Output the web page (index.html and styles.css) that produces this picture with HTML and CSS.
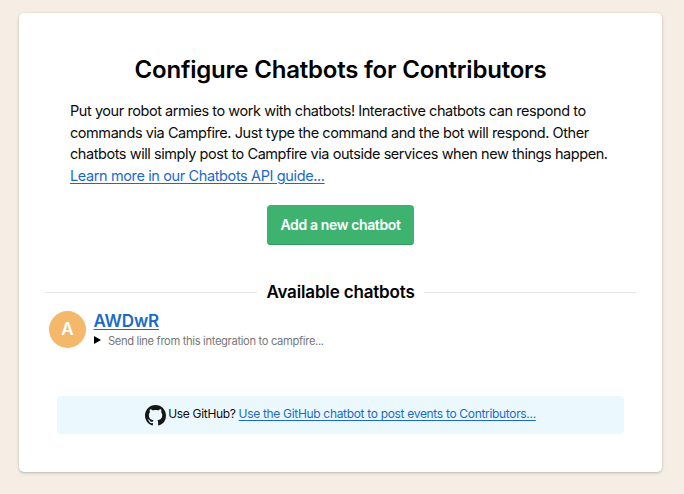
FILE: index.html
```html
<!DOCTYPE html>
<html lang="en">
<head>
<meta charset="utf-8">
<title>Configure Chatbots</title>
<link rel="stylesheet" href="styles.css">
</head>
<body>
<main class="panel">
  <h1 class="title">Configure Chatbots for Contributors</h1>
  <p class="intro">Put your robot armies to work with chatbots! Interactive chatbots can respond to<br>commands via Campfire. Just type the command and the bot will respond. Other<br>chatbots will simply post to Campfire via outside services when new things happen.<br><a href="#">Learn more in our Chatbots API guide...</a></p>
  <button class="button" type="button">Add a new chatbot</button>
  <h2 class="divider"><span>Available chatbots</span></h2>
  <section class="bot">
    <div class="avatar">A</div>
    <div class="bot-body">
      <a class="bot-name" href="#">AWDwR</a>
      <div class="bot-detail">
        <svg class="marker" viewBox="0 0 7 8"><path d="M0 0L7 4L0 8Z"/></svg>
        <span class="bot-hint">Send line from this integration to campfire...</span>
      </div>
    </div>
  </section>
  <aside class="notice">
    <svg class="github" viewBox="0 0 16 16"><path d="M8 0C3.58 0 0 3.58 0 8c0 3.54 2.29 6.53 5.47 7.59.4.07.55-.17.55-.38 0-.19-.01-.82-.01-1.49-2.01.37-2.53-.49-2.69-.94-.09-.23-.48-.94-.82-1.13-.28-.15-.68-.52-.01-.53.63-.01 1.08.58 1.23.82.72 1.21 1.87.87 2.33.66.07-.52.28-.87.51-1.07-1.78-.2-3.64-.89-3.64-3.95 0-.87.31-1.59.82-2.15-.08-.2-.36-1.02.08-2.12 0 0 .67-.21 2.2.82.64-.18 1.32-.27 2-.27s1.36.09 2 .27c1.53-1.04 2.2-.82 2.2-.82.44 1.1.16 1.92.08 2.12.51.56.82 1.27.82 2.15 0 3.07-1.87 3.75-3.65 3.95.29.25.54.73.54 1.48 0 1.07-.01 1.93-.01 2.2 0 .21.15.46.55.38A8.01 8.01 0 0 0 16 8c0-4.42-3.58-8-8-8z"/></svg>
    <span class="notice-label">Use GitHub?</span>
    <a class="notice-link" href="#">Use the GitHub chatbot to post events to Contributors...</a>
  </aside>
</main>
</body>
</html>
```
FILE: styles.css
```css
* { box-sizing: border-box; }
body {
  margin: 0;
  padding: 13px 22px 22px 19px;
  background: #f6eee4;
  color: #0b0b0b;
  font-family: Inter, "Liberation Sans", sans-serif;
}
a { color: #1b6ac9; text-decoration: underline; text-decoration-thickness: 1px; text-underline-offset: 2px; }
.panel {
  display: flex;
  flex-direction: column;
  height: 459px;
  padding: 41px 26px 0;
  background: #fff;
  border-radius: 5px;
  box-shadow: 0 1px 3px rgba(0, 0, 0, .25);
}
.title {
  margin: 0;
  text-align: center;
  font-size: 24px;
  font-weight: 600;
  line-height: 32px;
  letter-spacing: -.21px;
  white-space: nowrap;
  color: #000;
}
.intro {
  margin: 14px 0 0 25px;
  font-size: 14.5px;
  line-height: 21.6px;
  letter-spacing: -.435px;
  white-space: nowrap;
}
.intro a { letter-spacing: -.38px; }
.button {
  align-self: center;
  width: 147px;
  height: 40px;
  margin: 19px 0 0;
  padding: 0 0 2px;
  border: 0;
  border-radius: 4px;
  background: #3eb370;
  box-shadow: inset 0 -1px 0 #2c9b5d;
  color: #fff;
  font: 600 14px Inter, sans-serif;
  letter-spacing: -.38px;
  white-space: nowrap;
}
.divider {
  display: flex;
  align-items: center;
  gap: 9px;
  margin: 35px 0 0;
  font-size: 17px;
  font-weight: 600;
  line-height: 24px;
  letter-spacing: -.16px;
  white-space: nowrap;
  color: #000;
}
.divider::before, .divider::after { content: ""; flex: 1; height: 1px; background: #e6e6e6; }
.bot { display: flex; gap: 7.5px; margin: 7px 0 0 4px; height: 40px; }
.avatar {
  width: 37px;
  height: 37px;
  border-radius: 50%;
  background: #f4b86a;
  color: #fff;
  font-size: 17px;
  font-weight: 600;
  line-height: 37px;
  text-align: center;
}
.bot-body { display: flex; flex-direction: column; align-items: flex-start; }
.bot-name { font-size: 17px; font-weight: 600; line-height: 20px; letter-spacing: -.15px; }
.bot-detail { display: flex; align-items: center; gap: 7.5px; height: 19px; }
.marker { width: 7px; height: 8px; margin-bottom: 1px; fill: #000; }
.bot-hint { font-size: 11.2px; letter-spacing: -.34px; color: #777; white-space: nowrap; }
.notice {
  display: flex;
  align-items: center;
  justify-content: center;
  height: 38px;
  margin: 45px 12px 0;
  border-radius: 4px;
  background: #ebf9ff;
  font-size: 12px;
  letter-spacing: -.32px;
  white-space: nowrap;
}
.github { width: 21px; height: 21px; margin: 1px 2px 0 0; fill: #161616; }
.notice-label, .notice-link { padding-bottom: 3px; }
.notice-link { margin-left: 3px; }
```
